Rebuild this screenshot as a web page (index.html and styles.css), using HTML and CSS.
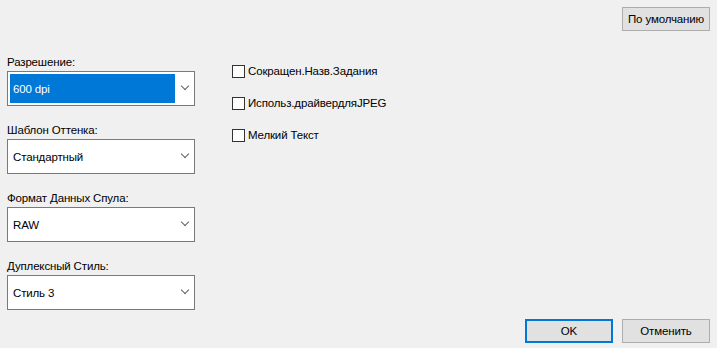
FILE: index.html
```html
<!DOCTYPE html>
<html lang="ru">
<head>
    <meta charset="UTF-8">
    <title>Параметры</title>
    <link rel="stylesheet" href="styles.css">
</head>
<body>
    <div class="dialog">
        <div class="top-bar">
            <button class="btn btn-default">По умолчанию</button>
        </div>

        <div class="main">
            <div class="fields">
                <div class="field">
                    <label>Разрешение:</label>
                    <div class="combo">
                        <span class="combo-value selected">600 dpi</span>
                        <span class="chevron"></span>
                    </div>
                </div>
                <div class="field">
                    <label>Шаблон Оттенка:</label>
                    <div class="combo">
                        <span class="combo-value">Стандартный</span>
                        <span class="chevron"></span>
                    </div>
                </div>
                <div class="field">
                    <label>Формат Данных Спула:</label>
                    <div class="combo">
                        <span class="combo-value">RAW</span>
                        <span class="chevron"></span>
                    </div>
                </div>
                <div class="field">
                    <label>Дуплексный Стиль:</label>
                    <div class="combo">
                        <span class="combo-value">Стиль 3</span>
                        <span class="chevron"></span>
                    </div>
                </div>
            </div>

            <div class="options">
                <div class="check-row"><span class="check-box"></span>Сокращен.Назв.Задания</div>
                <div class="check-row"><span class="check-box"></span>Использ.драйвердляJPEG</div>
                <div class="check-row"><span class="check-box"></span>Мелкий Текст</div>
            </div>
        </div>

        <div class="footer">
            <button class="btn btn-primary">OK</button>
            <button class="btn">Отменить</button>
        </div>
    </div>
</body>
</html>
```

FILE: styles.css
```css
body {
    margin: 0;
    padding: 0;
    background-color: #f0f0f0;
    font-family: 'Liberation Sans', Arial, sans-serif;
    font-size: 11.5px;
    letter-spacing: -0.15px;
    color: #000;
}

.dialog {
    width: 717px;
    height: 348px;
    display: flex;
    flex-direction: column;
    box-sizing: border-box;
    padding: 7px 7px 5px 7px;
}

.top-bar {
    display: flex;
    justify-content: flex-end;
}

.btn {
    width: 88px;
    height: 24px;
    background-color: #e1e1e1;
    border: 1px solid #adadad;
    font-family: inherit;
    font-size: 11.5px;
    letter-spacing: -0.15px;
    color: #000;
    padding: 0;
    box-sizing: border-box;
}

.btn-primary {
    border: 2px solid #0078d7;
}

.main {
    display: flex;
    margin-top: 23px;
}

.fields {
    width: 188px;
}

.field {
    padding-bottom: 16px;
}

.field:last-child {
    padding-bottom: 0;
}

.field label {
    display: block;
    height: 16px;
    line-height: 16px;
    margin-bottom: 1px;
}

.combo {
    height: 35px;
    background-color: #fff;
    border: 1px solid #7a7a7a;
    box-sizing: border-box;
    padding: 2px;
    display: flex;
    align-items: stretch;
}

.combo-value {
    width: 165px;
    padding-left: 3px;
    display: flex;
    align-items: center;
    box-sizing: border-box;
}

.combo-value.selected {
    background-color: #0078d7;
    color: #fff;
}

.chevron {
    flex: 1;
    position: relative;
}

.chevron::after {
    content: '';
    position: absolute;
    left: 7px;
    top: 9px;
    width: 5px;
    height: 5px;
    border-right: 1px solid #606060;
    border-bottom: 1px solid #606060;
    transform: rotate(45deg);
}

.options {
    margin-left: 37px;
    padding-top: 1px;
}

.check-row {
    height: 32px;
    display: flex;
    align-items: center;
}

.check-box {
    width: 13px;
    height: 13px;
    box-sizing: border-box;
    border: 1px solid #333;
    background-color: #fff;
    margin-right: 3px;
}

.footer {
    margin-top: auto;
    display: flex;
    justify-content: flex-end;
    gap: 9px;
}
```
